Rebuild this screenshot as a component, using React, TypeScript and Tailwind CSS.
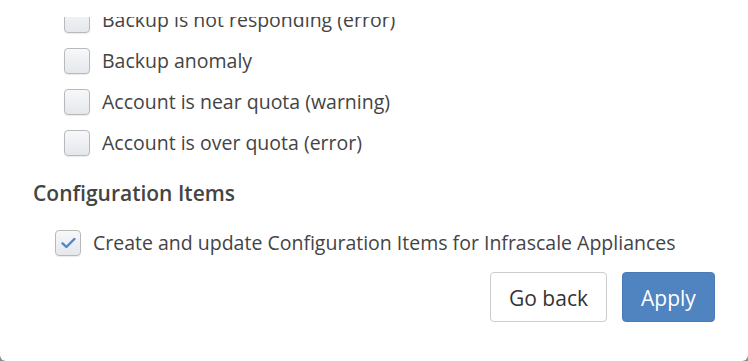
import React from "react";

function Box({ checked = false }: { checked?: boolean }) {
  return (
    <span className="flex h-[26px] w-[26px] shrink-0 items-center justify-center rounded-[4px] border border-[#b9b9b9] bg-gradient-to-b from-[#f7f8fa] to-[#e4e7ec] shadow-[0_1px_1px_rgba(0,0,0,0.08)]">
      {checked && (
        <svg width="15" height="12" viewBox="0 0 15 12" fill="none">
          <path d="M1.6 6.4 L5.4 10 L13.4 2" stroke="#4d87c7" strokeWidth="2.4" strokeLinecap="round" strokeLinejoin="round" />
        </svg>
      )}
    </span>
  );
}

const rows = [
  "Backup is not responding (error)",
  "Backup anomaly",
  "Account is near quota (warning)",
  "Account is over quota (error)",
];

export default function App() {
  return (
    <div className="h-[361px] w-[748px] bg-[#8a8a8a]" style={{ fontFamily: '"Open Sans", sans-serif' }}>
      <div className="flex h-[361px] w-[748px] flex-col rounded-b-[6px] bg-white text-[#444]">
        <div className="h-[17px] shrink-0 bg-white" />
        <div className="flex-1 overflow-hidden">
          <div className="mt-[-10px] flex flex-col">
            <div className="flex flex-col gap-[15px] pl-[64px]">
              {rows.map((r) => (
                <label key={r} className="flex h-[26px] items-center gap-[12px] text-[19.5px] leading-[26px]">
                  <Box />
                  <span>{r}</span>
                </label>
              ))}
            </div>
            <div className="mt-[24px] h-[26px] pl-[33px] text-[21px] font-semibold leading-[26px]">
              Configuration Items
            </div>
            <label className="mt-[24px] flex h-[26px] items-center gap-[12px] pl-[55px] text-[19.5px] leading-[26px]">
              <Box checked />
              <span>Create and update Configuration Items for Infrascale Appliances</span>
            </label>
            <div className="mt-[16px] flex justify-end gap-[15px] pr-[33px]">
              <button className="h-[50px] w-[117px] rounded-[4px] border border-[#ccc] bg-white pt-[3px] text-[21px] text-[#333]">
                Go back
              </button>
              <button className="h-[50px] w-[93px] rounded-[4px] border border-[#4a7bb7] bg-[#5084c1] pt-[3px] text-[21px] text-white">
                Apply
              </button>
            </div>
          </div>
        </div>
      </div>
    </div>
  );
}
